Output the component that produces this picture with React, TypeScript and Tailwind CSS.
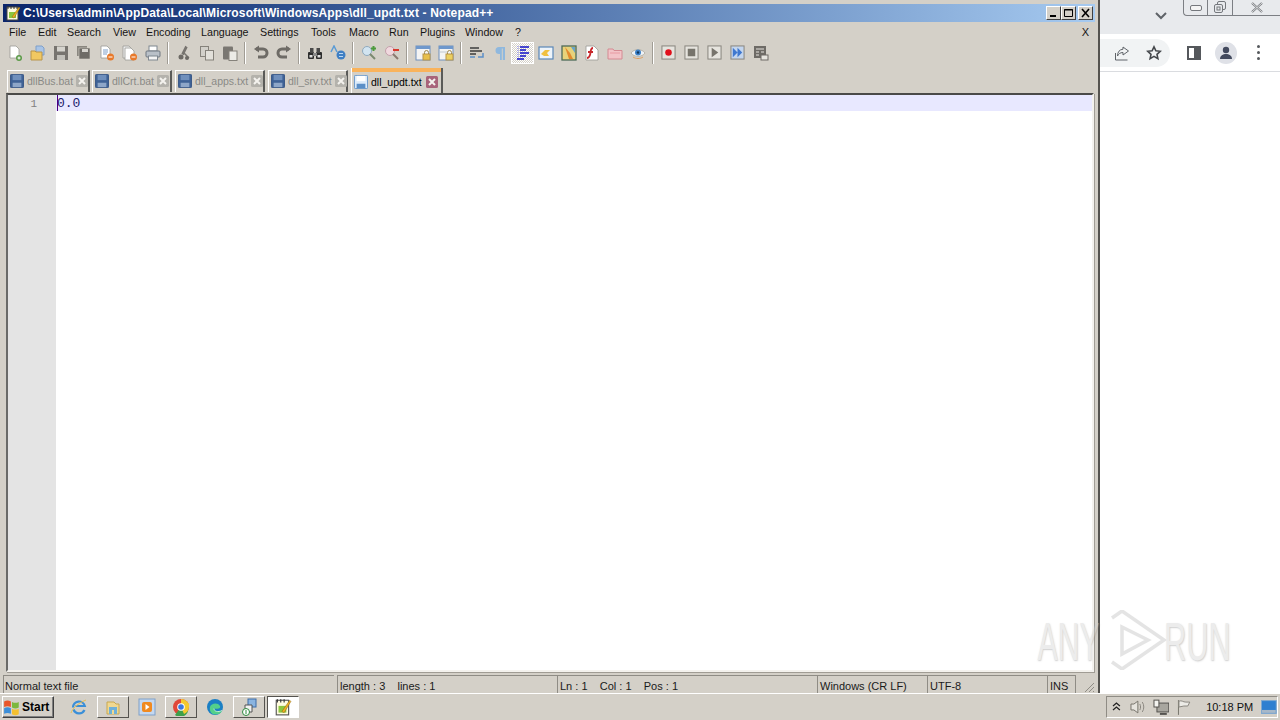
import type { ReactNode } from 'react';

// Notepad++ on a classic Windows desktop, Chrome peeking out behind it

const Ico = ({ children, size = 16 }: { children: ReactNode; size?: number }) => (
  <svg width={size} height={size} viewBox="0 0 16 16" className="block shrink-0">{children}</svg>
);

const Floppy = ({ active }: { active?: boolean }) => (
  <Ico size={14}>
    <rect x="0.5" y="0.5" width="15" height="15" rx="1" fill={active ? '#dcebfa' : '#3f6296'} stroke={active ? '#5b8fc7' : '#2f4f80'} />
    <rect x="3" y="1" width="10" height="6" fill={active ? '#ffffff' : '#6f8fbc'} />
    <rect x="3" y="10" width="10" height="5" fill={active ? '#5b8fc7' : '#8ea6c8'} />
  </Ico>
);

const TabClose = ({ active }: { active?: boolean }) => (
  <svg width="12" height="12" viewBox="0 0 12 12" className="block shrink-0">
    <rect width="12" height="12" rx="1.5" fill={active ? '#a8637a' : '#b4b2ac'} />
    <path d="M3 3l6 6M9 3l-6 6" stroke="#f4f2ee" strokeWidth="2" />
  </svg>
);

const Page = ({ x = 3, y = 1, fill = '#fff' }: { x?: number; y?: number; fill?: string }) => (
  <path d={`M${x} ${y}h6l3 3v9h-9z`} fill={fill} stroke="#9a9a94" strokeWidth="0.8" />
);

const Sep = () => (
  <div className="w-[8px] h-[22px] flex justify-center shrink-0">
    <div className="w-[2px] h-full bg-white border-l border-[#a09c94]" />
  </div>
);

const Btn = ({ children, active }: { children: ReactNode; active?: boolean }) => (
  <div className={`w-[23px] h-[22px] shrink-0 flex items-center justify-center ${active ? 'bg-[repeating-conic-gradient(#ffffff_0_25%,#d4d0c8_0_50%)] bg-[length:2px_2px] border border-[#ffffff]' : ''}`}>
    {children}
  </div>
);

const MacroBox = ({ children, bg = '#e6e4de' }: { children: ReactNode; bg?: string }) => (
  <Ico size={15}>
    <rect x="1" y="1" width="14" height="14" fill={bg} stroke="#8a8780" strokeWidth="1.1" />
    {children}
  </Ico>
);

function Toolbar() {
  return (
    <div className="h-[22px] flex items-center pl-[3px]">
      <Btn><Ico><Page /><circle cx="12" cy="13" r="3" fill="#5c9a48" /><path d="M10.5 13h3M12 11.5v3" stroke="#fff" /></Ico></Btn>
      <Btn><Ico><path d="M6 1h6l2 2v7H6z" fill="#a9c4e6" stroke="#7f9fc9" /><path d="M1 6h4l1 1h6v8H1z" fill="#f1c861" stroke="#b8944a" /></Ico></Btn>
      <Btn><Ico><rect x="1" y="1" width="14" height="14" fill="#77746f" /><rect x="4" y="1.5" width="8" height="5" fill="#d6d4ce" /><rect x="4" y="10" width="8" height="5" fill="#c2c0ba" /></Ico></Btn>
      <Btn><Ico><rect x="1" y="1" width="10" height="10" fill="#8a8780" /><rect x="3" y="3" width="11" height="11" fill="#6e6b66" stroke="#d4d0c8" strokeWidth="0.6" /><rect x="6" y="4" width="6" height="3" fill="#d6d4ce" /></Ico></Btn>
      <Btn><Ico><Page x={2} /><path d="M4 5h5M4 7h5M4 9h4" stroke="#7f9fc9" /><circle cx="11.5" cy="12" r="3.5" fill="#e8792a" /><path d="M9.5 12h4" stroke="#fff" /></Ico></Btn>
      <Btn><Ico><Page x={1} y={1} fill="#eee" /><Page x={3} y={3} /><circle cx="11.5" cy="12" r="3.5" fill="#e8792a" /><path d="M9.5 12h4" stroke="#fff" /></Ico></Btn>
      <Btn><Ico><rect x="4" y="1" width="8" height="5" fill="#fff" stroke="#7f8790" /><rect x="1" y="6" width="14" height="6" rx="1" fill="#b9c0c8" stroke="#6f7780" /><rect x="3.5" y="11" width="9" height="4" fill="#f4f4f4" stroke="#7f8790" /></Ico></Btn>
      <Sep />
      <Btn><Ico><path d="M10 1L6 9M11 2L7 10" stroke="#77746f" strokeWidth="1.5" /><path d="M8 8l5 5" stroke="#77746f" strokeWidth="1.5" /><circle cx="5" cy="12" r="2.5" fill="#6d6a65" /><circle cx="11" cy="13" r="2" fill="#6d6a65" /></Ico></Btn>
      <Btn><Ico><rect x="1.5" y="1.5" width="8" height="10" fill="#d2d0ca" stroke="#85827b" /><rect x="6.5" y="5.5" width="8" height="9.5" fill="#e2e0da" stroke="#85827b" /></Ico></Btn>
      <Btn><Ico><rect x="1" y="1.5" width="10" height="13" rx="1" fill="#7a7772" /><rect x="7" y="6" width="8" height="9.5" fill="#ecebe6" stroke="#85827b" /></Ico></Btn>
      <Sep />
      <Btn><Ico><path d="M3 4h7a3.5 3.5 0 0 1 0 8H5" fill="none" stroke="#6e6b66" strokeWidth="3" /><path d="M6 0.5v7L1 4z" fill="#6e6b66" /></Ico></Btn>
      <Btn><Ico><path d="M13 4H6a3.5 3.5 0 0 0 0 8h5" fill="none" stroke="#6e6b66" strokeWidth="3" /><path d="M10 0.5v7L15 4z" fill="#6e6b66" /></Ico></Btn>
      <Sep />
      <Btn><Ico><rect x="1" y="7" width="6" height="7" rx="1" fill="#2c2c2c" /><rect x="9" y="7" width="6" height="7" rx="1" fill="#2c2c2c" /><rect x="3" y="3" width="3.5" height="5" fill="#4a4a4a" /><rect x="9.5" y="3" width="3.5" height="5" fill="#4a4a4a" /><rect x="6" y="8" width="4" height="3" fill="#8a8a8a" /><rect x="2.5" y="10" width="3" height="2.5" fill="#e0e0e0" /><rect x="10.5" y="10" width="3" height="2.5" fill="#e0e0e0" /></Ico></Btn>
      <Btn><Ico><path d="M1 7l3-6 3 6" fill="none" stroke="#5b9bd5" strokeWidth="1.5" /><circle cx="11" cy="10" r="4.5" fill="#3f7fc4" /><path d="M9 8.5h4M9 11.5h4" stroke="#bcd8f2" /></Ico></Btn>
      <Sep />
      <Btn><Ico><circle cx="6" cy="6" r="4.5" fill="#d2e4f0" stroke="#8fa9bd" /><path d="M9 9l5 5" stroke="#7a8a70" strokeWidth="2" /><path d="M10 3.5h5M12.5 1v5" stroke="#4c9a3c" strokeWidth="2" /></Ico></Btn>
      <Btn><Ico><circle cx="6" cy="6" r="4.5" fill="#f0d8de" stroke="#c3a0aa" /><path d="M9 9l5 5" stroke="#8a7a70" strokeWidth="2" /><path d="M9 5h6" stroke="#d8382c" strokeWidth="2" /></Ico></Btn>
      <Sep />
      <Btn><Ico><rect x="1" y="1" width="14" height="14" fill="#f4f4f4" stroke="#6f8fbc" /><rect x="1" y="1" width="14" height="3" fill="#6f98cc" /><rect x="8" y="9" width="7" height="6" fill="#e8c04c" stroke="#b8944a" /><path d="M9.5 9V7.5a2 2 0 0 1 4 0V9" fill="none" stroke="#a08a50" /></Ico></Btn>
      <Btn><Ico><rect x="1" y="1" width="14" height="14" fill="#f4f4f4" stroke="#6f8fbc" /><rect x="1" y="1" width="14" height="3" fill="#6f98cc" /><path d="M2 7h7" stroke="#c0c8d0" /><rect x="8" y="9" width="7" height="6" fill="#ecd060" stroke="#b8944a" /><path d="M9.5 9V7.5a2 2 0 0 1 4 0V9" fill="none" stroke="#a08a50" /></Ico></Btn>
      <Sep />
      <Btn><Ico><path d="M1 3h9M1 6h12M1 9h6" stroke="#3c3c3c" strokeWidth="1.4" /><path d="M9 12h5V8" fill="none" stroke="#5b8fc7" strokeWidth="1.5" /><path d="M1 12h5" stroke="#5b8fc7" strokeWidth="1.5" /></Ico></Btn>
      <Btn><Ico size={16}><path d="M13 2H7a3.5 3.5 0 0 0 0 7h1v6h1.8V3.5h1V15H13z" fill="#8fb8de" /></Ico></Btn>
      <Btn active>
        <Ico><path d="M3 1v14" stroke="#7a7af0" strokeDasharray="1 1" /><path d="M5 2h9M5 5h6M5 8h9M5 11h6M2 14h7" stroke="#1010c8" strokeWidth="1.6" /></Ico>
      </Btn>
      <Btn><Ico><rect x="1" y="2" width="14" height="12" fill="#eef4fa" stroke="#5a87b8" strokeWidth="1.2" /><path d="M3 9l4-4h5l-3 3 2 3H6z" fill="#f0c040" /></Ico></Btn>
      <Btn><Ico><rect x="1" y="1" width="14" height="14" fill="#e8d27a" stroke="#4e6a58" strokeWidth="1.3" /><path d="M4 2l5 6 3 6H8L6 8z" fill="#e28a2e" /><path d="M10 2h4v6z" fill="#6aa5c8" /></Ico></Btn>
      <Btn><Ico><path d="M2 1h8l4 4v10H2z" fill="#fff" stroke="#9a9a94" strokeWidth="0.8" /><path d="M9 3c-3 0-2 4-3 7s-2 3-3 3M4 7h5" fill="none" stroke="#c8282c" strokeWidth="1.8" /></Ico></Btn>
      <Btn><Ico><path d="M1 4h5l1 1.5h8V14H1z" fill="#f2c4c8" stroke="#d48a92" /><path d="M3 8h10" stroke="#e89aa2" /></Ico></Btn>
      <Btn><Ico><path d="M1 8c3-4.5 11-4.5 14 0-3 4.500-11 4.500-14 0z" fill="#eef2f6" stroke="#b8b4aa" /><circle cx="8" cy="7.5" r="3" fill="#3d82c8" /><circle cx="8" cy="7.5" r="1.2" fill="#12365e" /><path d="M3 12c3 2 7 2 10 0" fill="none" stroke="#e0a060" /></Ico></Btn>
      <Sep />
      <Btn><MacroBox><circle cx="8" cy="8" r="3.5" fill="#e0101c" /></MacroBox></Btn>
      <Btn><MacroBox><rect x="4" y="4" width="8" height="8" fill="#77746c" /></MacroBox></Btn>
      <Btn><MacroBox><path d="M5 3l7 5-7 5z" fill="#77746c" /></MacroBox></Btn>
      <Btn><MacroBox bg="#c4d6ee"><path d="M3 3l5 5-5 5zM8 3l5 5-5 5z" fill="#3f78d0" /></MacroBox></Btn>
      <Btn><Ico><rect x="1" y="1" width="12" height="12" fill="#6e6b66" /><path d="M3 4h8M3 7h3M3 10h3M8 7h3" stroke="#e6e4de" /><rect x="8" y="10" width="7" height="5" fill="#e6e4de" stroke="#6e6b66" /></Ico></Btn>
    </div>
  );
}

const TABS = [
  { name: 'dllBus.bat', w: 'w-[83px]', mr: 'mr-[2px]' },
  { name: 'dllCrt.bat', w: 'w-[80px]', mr: 'mr-[3px]' },
  { name: 'dll_apps.txt', w: 'w-[90px]', mr: 'mr-[3px]' },
  { name: 'dll_srv.txt', w: 'w-[80px]', mr: 'mr-[3px]' },
];

function Tabs() {
  return (
    <div className="h-[25px] mt-[4px] pl-[7px] flex items-start">
      {TABS.map(t => (
        <div key={t.name} className={`${t.w} ${t.mr} h-[22px] mt-[2px] border-t border-l border-white border-r-2 border-r-[#5a5a58] flex items-center pl-[2px] pr-[1px] gap-[3px] text-[10.5px] text-[#8a8a86]`}>
          <Floppy />
          <span className="flex-1 whitespace-nowrap">{t.name}</span>
          <TabClose />
        </div>
      ))}
      <div className="w-[92px] h-[25px] flex flex-col border-l border-white border-r-2 border-r-[#5a5a58]">
        <div className="h-[4px] bg-[#f9b35c]" />
        <div className="flex-1 flex items-center pl-[2px] pr-[3px] gap-[3px] text-[10.5px] text-black">
          <Floppy active />
          <span className="flex-1 whitespace-nowrap">dll_updt.txt</span>
          <TabClose active />
        </div>
      </div>
    </div>
  );
}

const MENUS = [
  { l: 'File', w: 'w-[29px]' }, { l: 'Edit', w: 'w-[29px]' }, { l: 'Search', w: 'w-[46px]' }, { l: 'View', w: 'w-[33px]' },
  { l: 'Encoding', w: 'w-[55px]' }, { l: 'Language', w: 'w-[59px]' }, { l: 'Settings', w: 'w-[51px]' }, { l: 'Tools', w: 'w-[38px]' },
  { l: 'Macro', w: 'w-[40px]' }, { l: 'Run', w: 'w-[31px]' }, { l: 'Plugins', w: 'w-[45px]' }, { l: 'Window', w: 'w-[50px]' }, { l: '?', w: 'w-[10px]' },
];

function Window() {
  return (
    <div className="w-[1100px] h-full flex flex-col bg-[#d4d0c8] border-r-2 border-r-[#55534f] pt-[4px]">
      {/* title bar */}
      <div className="h-[18px] ml-[3px] mr-[3px] flex items-center bg-gradient-to-r from-[#0a246a] to-[#a6caf0] pl-[2px] pr-[2px]">
        <Ico><rect x="2" y="2" width="11" height="13" fill="#fffbe0" stroke="#444" /><path d="M3 1v3M6 1v3M9 1v3M12 1v3" stroke="#333" /><path d="M4 7h7v6H4z" fill="#8cc63f" /><path d="M7 12l7-10 1 1-6 10z" fill="#f0b020" stroke="#7a5a10" strokeWidth="0.4" /></Ico>
        <span className="ml-[2px] flex-1 font-bold text-white text-[12px] tracking-[0.15px] whitespace-nowrap">C:\Users\admin\AppData\Local\Microsoft\WindowsApps\dll_updt.txt - Notepad++</span>
        <div className="flex items-center">
          {['min', 'max', 'close'].map(k => (
            <div key={k} className={`w-[15px] h-[14px] bg-[#d4d0c8] border border-t-white border-l-white border-r-[#404040] border-b-[#404040] flex items-center justify-center ${k === 'close' ? 'ml-[2px]' : ''}`}>
              <svg width="11" height="10" viewBox="0 0 11 10">
                {k === 'min' && <rect x="2" y="7" width="6" height="2" fill="#000" />}
                {k === 'max' && <path d="M1.5 1.5h8v7h-8zM1 2h9" fill="none" stroke="#000" />}
                {k === 'close' && <path d="M2 1l7 8M9 1l-7 8" stroke="#000" strokeWidth="1.6" />}
              </svg>
            </div>
          ))}
        </div>
      </div>
      {/* menu */}
      <div className="h-[20px] pl-[9px] pr-[9px] flex items-center text-[10.7px] text-[#141414]">
        {MENUS.map(m => <span key={m.l} className={m.w}>{m.l}</span>)}
        <span className="ml-auto text-[11px]">X</span>
      </div>
      <Toolbar />
      <Tabs />
      {/* editor */}
      <div className="h-[581px] ml-[6px] mr-[4px] border-t-2 border-l-2 border-t-[#4a4a48] border-l-[#6a6a68] border-r-2 border-r-[#f4f2ee] border-b-2 border-b-[#f4f2ee] shadow-[1px_1px_0_#a09c94] flex bg-white">
        <div className="w-[48px] bg-[#e4e4e4] h-full">
          <div className="h-[16px] pr-[19px] text-right font-['Liberation_Mono',monospace] text-[11px] leading-[18px] text-[#808080]">1</div>
        </div>
        <div className="flex-1 h-full">
          <div className="h-[16px] bg-[#e8e8ff] relative font-['Liberation_Mono',monospace] text-[13px] leading-[18px] text-[#20206a] pl-[1px]">
            0.0
            <div className="absolute left-[1px] top-0 h-[16px] w-px bg-[#4b0082]" />
          </div>
        </div>
      </div>
      {/* status bar */}
      <div className="flex-1 pt-[3px] flex items-stretch text-[#1a1a1a]">
        <div className="w-[331px] ml-[3px] border-t border-l border-[#8f8c85] pl-[1px] pt-[3px] whitespace-nowrap">Normal text file</div>
        <div className="w-[220px] ml-[3px] border-t border-l border-[#8f8c85] pl-[2px] pt-[3px] whitespace-pre">length : 3    lines : 1</div>
        <div className="w-[260px] border-t border-l border-[#8f8c85] pl-[2px] pt-[3px] whitespace-pre">Ln : 1    Col : 1    Pos : 1</div>
        <div className="w-[110px] border-t border-l border-[#8f8c85] pl-[2px] pt-[3px] whitespace-nowrap">Windows (CR LF)</div>
        <div className="w-[120px] border-t border-l border-[#8f8c85] pl-[2px] pt-[3px]">UTF-8</div>
        <div className="w-[29px] border-t border-l border-r border-[#8f8c85] pl-[2px] pt-[3px]">INS</div>
        <div className="flex-1 flex items-end justify-end pr-[3px]">
          <svg width="12" height="12" viewBox="0 0 12 12"><path d="M11 2l-9 9M11 6l-5 5M11 10l-1 1" stroke="#8f8c85" /></svg>
        </div>
      </div>
    </div>
  );
}

function ChromeSide() {
  return (
    <div className="flex-1 h-full bg-white flex flex-col">
      <div className="h-[34px] bg-[#e8eaed] flex items-start">
        <svg width="12" height="8" viewBox="0 0 12 8" className="mt-[12px] ml-[55px]"><path d="M1 1l5 5 5-5" fill="none" stroke="#5f6368" strokeWidth="2" /></svg>
        <div className="ml-[16px] w-[97px] h-[16px] border-l border-b border-[#7c7f84] rounded-bl-[4px] flex">
          <div className="w-[24px] flex items-center justify-center border-r border-[#7c7f84]"><div className="w-[12px] h-[6px] border border-[#75787d] rounded-[2px] bg-[#f4f4f4]" /></div>
          <div className="w-[25px] flex items-center justify-center border-r border-[#7c7f84]">
            <svg width="12" height="13" viewBox="0 0 12 13"><rect x="3.5" y="0.5" width="8" height="8" rx="1.5" fill="none" stroke="#75787d" /><rect x="0.5" y="3.5" width="8" height="8" rx="1.5" fill="#e8eaed" stroke="#75787d" /><rect x="3" y="6" width="3" height="3" fill="none" stroke="#75787d" /></svg>
          </div>
          <div className="flex-1 flex items-center justify-center">
            <svg width="12" height="11" viewBox="0 0 12 11"><path d="M1 1l10 9M11 1L1 10" stroke="#75787d" strokeWidth="2.2" /><path d="M1 1l10 9M11 1L1 10" stroke="#f4f4f4" strokeWidth="0.8" /></svg>
          </div>
        </div>
      </div>
      <div className="h-[38px] border-b border-[#dadce0] flex items-center">
        <div className="w-[70px] h-[28px] bg-[#f1f3f4] rounded-r-[14px] flex items-center pl-[14px] gap-[16px]">
          <svg width="16" height="16" viewBox="0 0 16 16"><path d="M1.5 8v7h12" fill="none" stroke="#5f6368" /><path d="M9 2l5.5 4L9 10V7.5C6 7.5 4.500 9 3.500 11c0-4 2-6.500 5.500-6.800z" fill="none" stroke="#5f6368" /></svg>
          <svg width="16" height="16" viewBox="0 0 16 16"><path d="M8 1.800l1.900 4 4.300.500-3.200 3 .9 4.300L8 11.400l-3.900 2.200.9-4.300-3.200-3 4.300-.5z" fill="none" stroke="#44474b" strokeWidth="1.6" /></svg>
        </div>
        <div className="ml-[17px] w-[14px] h-[14px] border-2 border-[#55585c] flex justify-end"><div className="w-[5px] bg-[#55585c]" /></div>
        <div className="ml-[14px] w-[22px] h-[22px] rounded-full bg-[#dfe1e7] overflow-hidden flex items-center justify-center">
          <svg width="16" height="16" viewBox="0 0 16 16"><circle cx="8" cy="5" r="3.200" fill="#434a5e" /><path d="M2 14c0-3.500 3-5 6-5s6 1.500 6 5z" fill="#434a5e" /></svg>
        </div>
        <div className="ml-[20px] flex flex-col gap-[3px]">
          <div className="w-[3px] h-[3px] rounded-full bg-[#55585c]" />
          <div className="w-[3px] h-[3px] rounded-full bg-[#55585c]" />
          <div className="w-[3px] h-[3px] rounded-full bg-[#55585c]" />
        </div>
      </div>
    </div>
  );
}

const TaskBtn = ({ children, raised, pressed }: { children: ReactNode; raised?: boolean; pressed?: boolean }) => (
  <div className={`h-[22px] w-[32px] flex items-center justify-center shrink-0 ${raised ? 'border border-t-white border-l-white border-r-[#55534f] border-b-[#55534f]' : ''} ${pressed ? 'bg-white border border-t-[#55534f] border-l-[#55534f] border-r-white border-b-white' : ''}`}>
    {children}
  </div>
);

function Taskbar() {
  return (
    <div className="h-[27px] bg-[#d4d0c8] border-t border-t-white flex items-center pl-[2px] pr-[2px]">
      <div className="w-[52px] h-[22px] border border-t-white border-l-white border-r-[#404040] border-b-[#404040] flex items-center gap-[1px] shadow-[inset_-1px_-1px_0_#808080]">
        <svg width="18" height="18" viewBox="0 0 16 16" className="shrink-0">
          <path d="M1 3c2-1 4-1 6 0v5c-2-1-4-1-6 0z" fill="#e8562a" />
          <path d="M8 3.500c2 1 4 1 6 0v5c-2 1-4 1-6 0z" fill="#7cb83c" />
          <path d="M1 9c2-1 4-1 6 0v5c-2-1-4-1-6 0z" fill="#3c8ed8" />
          <path d="M8 9.500c2 1 4 1 6 0v5c-2 1-4 1-6 0z" fill="#f4c030" />
        </svg>
        <span className="font-bold text-[12px] text-black">Start</span>
      </div>
      <div className="ml-[9px] flex gap-[2px]">
        <TaskBtn>
          <svg width="18" height="18" viewBox="0 0 18 18"><path d="M3 9.500a6 6 0 0 1 11.800-1.500H5.500M14.500 12a6 6 0 0 1-11-.500" fill="none" stroke="#3a8fd8" strokeWidth="2.200" /><path d="M1 15c1-4 7-10 15-13" fill="none" stroke="#e8c050" strokeWidth="1" /></svg>
        </TaskBtn>
        <TaskBtn raised>
          <svg width="18" height="18" viewBox="0 0 18 18"><path d="M3 4h7l2 2h3v10H3z" fill="#f0d890" stroke="#c8a850" /><rect x="5" y="9" width="8" height="7" fill="#6fb0d8" /><rect x="8" y="12" width="2" height="4" fill="#f0d890" /></svg>
        </TaskBtn>
        <TaskBtn>
          <svg width="18" height="18" viewBox="0 0 18 18"><rect x="1" y="1" width="16" height="16" fill="#c4d8f0" stroke="#7fa0c8" /><rect x="4" y="4" width="10" height="10" rx="2" fill="#f08a20" /><path d="M7.500 6l4 3-4 3z" fill="#fff" /></svg>
        </TaskBtn>
        <TaskBtn raised>
          <svg width="18" height="18" viewBox="0 0 18 18"><circle cx="9" cy="9" r="8" fill="#e0483a" /><path d="M9 9L3 17a8 8 0 0 0 13-4z" fill="#3fa04c" /><path d="M9 1a8 8 0 0 1 8 8 8 8 0 0 1-5 7L9 9z" fill="#f5c92f" /><path d="M9 5h7.500A8 8 0 0 1 17 9H9z" fill="#f5c92f" /><circle cx="9" cy="9" r="3.800" fill="#fff" /><circle cx="9" cy="9" r="2.800" fill="#3b78e0" /></svg>
        </TaskBtn>
        <TaskBtn>
          <svg width="18" height="18" viewBox="0 0 18 18"><circle cx="9" cy="9" r="8" fill="#1b7fc4" /><path d="M4 9c1-4 8-5 10-1 1 3-3 3-6 2.500 0 3 4 4 8 2-1 3-4 4-7 4-3 0-6-3-5-7.500z" fill="#53d08a" /><path d="M8 10.500c0 3 4 4 8 2" fill="none" stroke="#bff0d0" /></svg>
        </TaskBtn>
        <TaskBtn raised>
          <svg width="18" height="18" viewBox="0 0 18 18"><rect x="8" y="1" width="8" height="8" fill="#8ab4e0" stroke="#3c6ca8" /><path d="M5 7h7v7H5z" fill="#f2f2f2" stroke="#555" /><circle cx="6" cy="14" r="3.500" fill="#fff" stroke="#2c8a3c" /><path d="M6 12v4" stroke="#2c8a3c" /></svg>
        </TaskBtn>
        <TaskBtn pressed>
          <svg width="18" height="18" viewBox="0 0 16 16"><rect x="2" y="2" width="11" height="13" fill="#fffbe0" stroke="#555" /><path d="M3 1v3M6 1v3M9 1v3" stroke="#333" /><path d="M4 7h7v6H4z" fill="#8cc63f" /><path d="M7 12l7-10 1 1-6 10z" fill="#f0b020" stroke="#7a5a10" strokeWidth="0.4" /></svg>
        </TaskBtn>
      </div>
      {/* tray */}
      <div className="ml-auto w-[172px] h-[22px] border border-t-[#8f8c85] border-l-[#8f8c85] border-r-white border-b-white flex items-center pl-[5px]">
        <svg width="9" height="10" viewBox="0 0 9 10"><path d="M1 4l3.500-3L8 4M1 8l3.500-3L8 8" fill="none" stroke="#222" strokeWidth="1.300" /></svg>
        <svg width="18" height="16" viewBox="0 0 18 16" className="ml-[8px]"><path d="M2 5h3l4-3v12l-4-3H2z" fill="#e6e4de" stroke="#77746c" /><path d="M11 5c1 2 1 4 0 6M13.500 3c2 3 2 7 0 10" fill="none" stroke="#8a8780" /></svg>
        <svg width="17" height="17" viewBox="0 0 17 17" className="ml-[6px]"><rect x="4" y="4" width="12" height="9" fill="#a8a69f" stroke="#55534f" /><rect x="1" y="1" width="5" height="7" fill="#f4f4f0" stroke="#55534f" /><path d="M7 15h7" stroke="#55534f" strokeWidth="2" /></svg>
        <svg width="16" height="17" viewBox="0 0 16 17" className="ml-[7px]"><path d="M2.500 1v15" stroke="#77746c" /><path d="M3 2c3-1 4 1 7 1h4l-2 4H8L3 8z" fill="#ecebe6" stroke="#8a8780" /></svg>
        <span className="ml-[14px] text-[#111] whitespace-nowrap">10:18 PM</span>
        <svg width="16" height="14" viewBox="0 0 16 14" className="ml-[8px]"><rect x="0.500" y="0.500" width="15" height="13" fill="#2f7fd0" stroke="#7fa8d0" /><rect x="1" y="10" width="14" height="3" fill="#a8b8c8" /></svg>
      </div>
    </div>
  );
}

function Watermark() {
  return (
    <div className="absolute left-[1038px] top-[610px] w-[194px] h-[60px] text-[#d0d0d0] opacity-40 pointer-events-none">
      <span className="absolute left-[-24px] top-[2px] text-[53px] leading-[60px] scale-x-[0.57] origin-center [text-shadow:1px_1px_2px_#888]">ANY</span>
      <svg width="60" height="60" viewBox="0 0 60 60" className="absolute left-[70px] top-0">
        <path d="M4 8L14 1 56 30 14 59 4 52" fill="none" stroke="#bdbdbd" strokeWidth="3.500" />
        <path d="M14 17L40 30 14 44z" fill="none" stroke="#bdbdbd" strokeWidth="3.500" />
      </svg>
      <span className="absolute left-[102px] top-[2px] text-[53px] leading-[60px] scale-x-[0.58] origin-center [text-shadow:1px_1px_2px_#888]">RUN</span>
    </div>
  );
}

export default function App() {
  return (
    <div className="relative w-[1280px] h-[720px] overflow-hidden flex flex-col font-['Liberation_Sans',Arial,sans-serif] text-[11px] leading-[14px] bg-white">
      <div className="h-[693px] flex">
        <Window />
        <ChromeSide />
      </div>
      <Taskbar />
      <Watermark />
    </div>
  );
}
